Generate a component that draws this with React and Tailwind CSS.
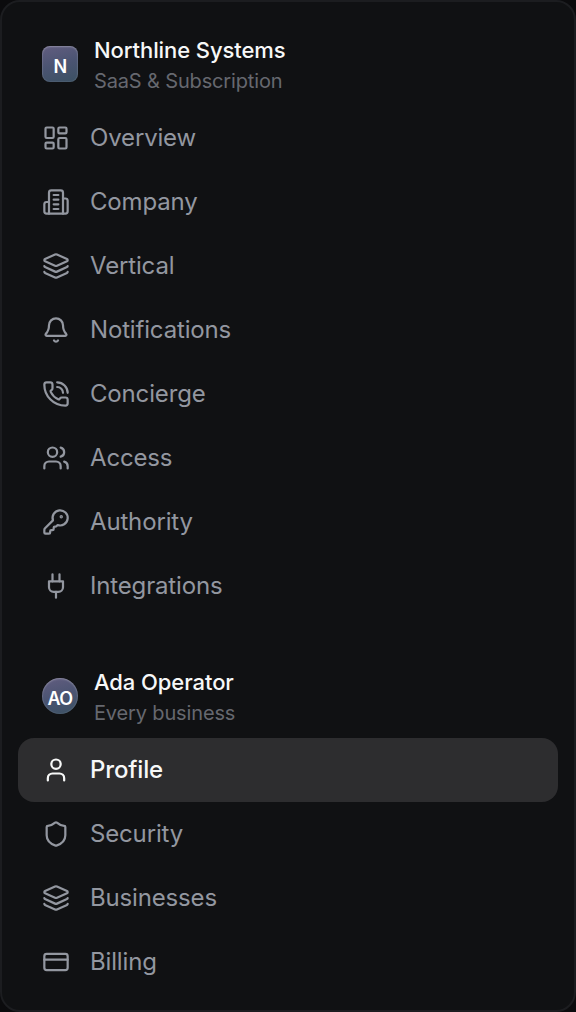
import React from 'react';
import {
  Bell,
  CreditCard,
  KeyRound,
  Layers,
  LayoutDashboard,
  PhoneCall,
  Shield,
  User,
  Users,
} from 'lucide-react';

const iconProps = {
  viewBox: '0 0 24 24',
  fill: 'none',
  stroke: 'currentColor',
  strokeLinecap: 'round',
  strokeLinejoin: 'round',
  'aria-hidden': true,
};

const Building = ({ className, strokeWidth }) => (
  <svg {...iconProps} className={className} strokeWidth={strokeWidth}>
    <path d="M6 22V4a2 2 0 0 1 2-2h8a2 2 0 0 1 2 2v18Z" />
    <path d="M6 12H4a2 2 0 0 0-2 2v6a2 2 0 0 0 2 2h2" />
    <path d="M18 9h2a2 2 0 0 1 2 2v9a2 2 0 0 1-2 2h-2" />
    <path d="M10 6h4M10 10h4M10 14h4M10 18h4" />
  </svg>
);

const Plug = ({ className, strokeWidth }) => (
  <svg {...iconProps} className={className} strokeWidth={strokeWidth}>
    <path d="M12 22v-5M9 8V2M15 8V2" />
    <path d="M18 8v5a4 4 0 0 1-4 4h-4a4 4 0 0 1-4-4V8Z" />
  </svg>
);

const businessItems = [
  { label: 'Overview', icon: LayoutDashboard },
  { label: 'Company', icon: Building },
  { label: 'Vertical', icon: Layers },
  { label: 'Notifications', icon: Bell },
  { label: 'Concierge', icon: PhoneCall },
  { label: 'Access', icon: Users },
  { label: 'Authority', icon: KeyRound },
  { label: 'Integrations', icon: Plug },
];

const accountItems = [
  { label: 'Profile', icon: User, active: true },
  { label: 'Security', icon: Shield },
  { label: 'Businesses', icon: Layers },
  { label: 'Billing', icon: CreditCard },
];

const SectionHeader = ({ initials, title, subtitle, shape }) => (
  <div className="flex h-[72px] items-start gap-4 px-6">
    <div
      className={`mt-4 flex size-9 shrink-0 items-center justify-center bg-linear-165 from-[#625d80] via-[#4b5472] to-[#3b5163] pt-[5px] text-lg font-[580] tracking-[-0.03em] text-white inset-shadow-[0_1px_2px_rgba(255,255,255,0.25)] inset-ring inset-ring-white/5 ${shape}`}
    >
      {initials}
    </div>
    <div className="mt-[5px] flex flex-col gap-px">
      <h2 className="text-[22px] leading-[30px] font-medium tracking-[-0.08px] text-[#f7f8f8]">
        {title}
      </h2>
      <p className="text-[20px] leading-[30px] tracking-[-0.15px] text-[#66686f]">{subtitle}</p>
    </div>
  </div>
);

const NavItem = ({ label, icon: Icon, active }) => (
  <a
    className={`flex h-16 items-center gap-5 rounded-2xl px-6 text-2xl tracking-[-0.16px] ${
      active ? 'bg-[#2d2d2f] font-[450] text-[#f7f8f8]' : 'text-[#9397a0]'
    }`}
  >
    <Icon className="size-7 shrink-0" strokeWidth={1.9} />
    <span>{label}</span>
  </a>
);

const App = () => {
  return (
    <div className="h-[1012px] w-[576px] bg-[#0b0b0d] font-['Inter',sans-serif]">
      <aside className="flex h-[1012px] flex-col rounded-[20px] border-2 border-[#1c1d20] bg-[#101113] px-4 pt-7">
        <SectionHeader
          initials="N"
          title="Northline Systems"
          subtitle="SaaS & Subscription"
          shape="rounded-lg"
        />
        <nav className="mt-1 flex flex-col">
          {businessItems.map((item) => (
            <NavItem key={item.label} {...item} />
          ))}
        </nav>

        <div className="mt-11">
          <SectionHeader
            initials="AO"
            title="Ada Operator"
            subtitle="Every business"
            shape="rounded-full"
          />
        </div>
        <nav className="mt-1 flex flex-col">
          {accountItems.map((item) => (
            <NavItem key={item.label} {...item} />
          ))}
        </nav>
      </aside>
    </div>
  );
};

export default App;
